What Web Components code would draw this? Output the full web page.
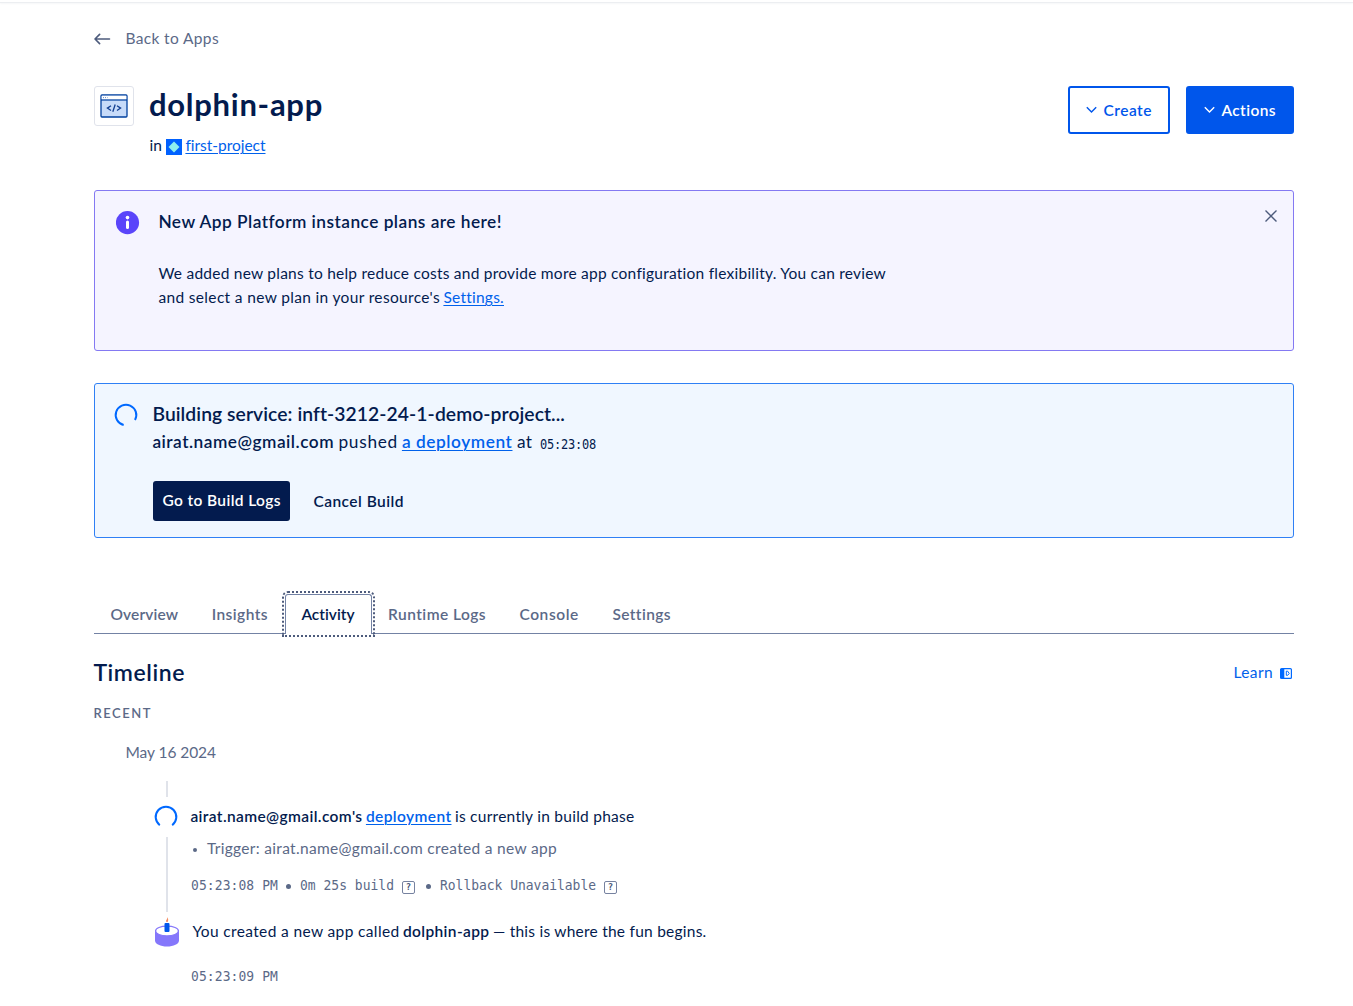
<!DOCTYPE html>
<html lang="en">
<head>
<meta charset="utf-8">
<title>dolphin-app</title>
<style>
html,body{margin:0;background:#fff}
body{font-family:Lato,"Open Sans",sans-serif;font-size:15.5px;line-height:24px;color:#031b4e;width:1353px;height:1006px;overflow:hidden}
</style>
</head>
<body>
<app-page></app-page>
<script>
const define = (name, html, setup) => customElements.define(name, class extends HTMLElement {
  constructor() {
    super();
    const t = document.createElement('template');
    t.innerHTML = html;
    this.attachShadow({mode: 'open'}).append(t.content.cloneNode(true));
  }
  connectedCallback() { if (setup) setup(this); }
});

/* A single run of text tracked to an exact measure, given in px by "w". */
define('text-run', `<style>
:host{display:block;flex:none;white-space:pre;letter-spacing:.01px;text-indent:-.6px}
:host([link]){color:#0061eb;text-decoration:underline;text-underline-offset:2px;text-decoration-thickness:1px}
:host([strong]){font-weight:600}
:host([mono]){font-family:"DejaVu Sans Mono",monospace;font-size:13px;text-indent:0;transform:scaleY(1.1)}
:host([mono][small]){font-size:12px;transform:scaleY(1.15)}
</style><slot></slot>`, el => {
  const w = parseFloat(el.getAttribute('w'));
  if (!w) return;
  el.style.width = 'max-content';
  const natural = el.getBoundingClientRect().width;
  el.style.letterSpacing = ((w - natural) / el.textContent.length + .01).toFixed(3) + 'px';
  el.style.width = w + 'px';
});

define('text-row', `<style>:host{display:flex;align-items:baseline}</style><slot></slot>`);

define('load-spinner', `<style>:host{display:block;width:24px;height:24px;flex:none}svg{display:block;transform:rotate(var(--turn,0deg))}</style>
<svg width="24" height="24" viewBox="0 0 24 24" fill="none" stroke="#0069ff" stroke-width="2"><path d="M5.8 20.2A10.3 10.3 0 1 1 18.2 20.2"/></svg>`);

define('help-mark', `<style>:host{display:block;box-sizing:border-box;width:13px;height:13px;border:1px solid #7682a0;border-radius:2px;font:bold 9px/11px "DejaVu Sans Mono",monospace;text-align:center;color:#4a5878;flex:none}</style>?`);

define('bullet-dot', `<style>:host{display:block;width:5px;height:5px;border-radius:50%;background:#5b6987;flex:none}</style>`);

define('menu-button', `<style>
:host{display:flex;box-sizing:border-box;height:48px;border:2px solid #0056eb;border-radius:3px;align-items:center;padding:0 0 1px 16px;color:#0056eb;font-weight:600}
:host([solid]){background:#0056eb;color:#fff}
svg{margin-right:7px}
</style><svg width="11" height="8" viewBox="0 0 11 8" fill="none" stroke="currentColor" stroke-width="1.4"><path d="M.8 1.2 5.5 6 10.2 1.2"/></svg><slot></slot>`);

define('app-header', `<style>
:host{display:flex;height:80px;margin-top:36px;align-items:flex-start}
.tile{box-sizing:border-box;width:40px;height:40px;border:1px solid #e0e3eb;border-radius:3px;display:flex;align-items:center;justify-content:center}
.names{margin-left:16px;flex:1;margin-top:-1px}
.title{font-size:31px;line-height:38px;font-weight:700;text-indent:-1px}
.project{margin-top:10px;display:flex}
.project svg{margin:6px 4px 0 4px}
.actions{display:flex;gap:16px}
</style>
<div class="tile"><svg width="28" height="24" viewBox="0 0 28 24"><rect x="1" y="1" width="26" height="22" rx="1" fill="#c7dbf9" stroke="#00409e" stroke-width="1.3"/><path d="M1.7 1.7h24.6v3.8H1.7z" fill="#fff"/><path d="M1 6h26" stroke="#00409e" stroke-width="1.2"/><path d="M3 3.6h1m1 0h1m1 0h.6" stroke="#6c8fc8" stroke-width="1"/><g fill="none" stroke="#123f91" stroke-width="1.3"><path d="m11 11.700-3.600 2.400 3.600 2.400M17 11.700l3.600 2.400-3.600 2.400M15.200 10.500l-2.400 7.200"/></g></svg></div>
<div class="names">
<text-run class="title" w="173">dolphin-app</text-run>
<div class="project"><text-run w="12">in</text-run><svg width="16" height="16" viewBox="0 0 16 16"><path fill="#0061ff" d="M0 0h16v16H0z"/><path fill="#8ff0ee" d="m8 2.500 5.500 5.500L8 13.500 2.500 8z"/></svg><text-run link w="79.500">first-project</text-run></div>
</div>
<div class="actions"><menu-button style="width:102px"><text-run w="48">Create</text-run></menu-button><menu-button solid style="width:108px"><text-run w="54">Actions</text-run></menu-button></div>`);

define('plans-notice', `<style>
:host{display:flex;box-sizing:border-box;height:161px;margin-top:24px;border:1px solid #8479f2;border-radius:3px;background:#f5f4ff;align-items:flex-start;padding:20px 16px 0 21px}
.copy{flex:1;margin-left:19px}
.head{font-size:17.3px;font-weight:600}
.body{margin-top:27px}
.x{margin-top:-1px}
</style>
<svg width="24" height="24" viewBox="0 0 24 24"><circle cx="11.500" cy="11.600" r="11.600" fill="#5a45fa"/><circle cx="11.500" cy="6.600" r="1.800" fill="#fff"/><path d="M11.500 11v5.600" stroke="#fff" stroke-width="3" stroke-linecap="round"/></svg>
<div class="copy" style="margin-top:-1px"><text-run class="head" w="343">New App Platform instance plans are here!</text-run>
<div class="body"><text-run w="727">We added new plans to help reduce costs and provide more app configuration flexibility. You can review</text-run>
<text-row><text-run w="281">and select a new plan in your resource's</text-run><text-run link w="60" style="margin-left:4px">Settings.</text-run></text-row></div></div>
<svg class="x" width="12" height="12" viewBox="0 0 12 12" fill="none" stroke="#4d5b7c" stroke-width="1.4"><path d="m.5.5 11 11m0-11-11 11"/></svg>`);

define('build-status', `<style>
:host{display:flex;box-sizing:border-box;height:155px;margin-top:32px;border:1px solid #2f80f5;border-radius:3px;background:#f0f7ff;padding:19px 16px 0 19px}
load-spinner{--turn:-24deg}
.copy{margin-left:15px;margin-top:-3px}
.head{font-size:19.3px;line-height:28px;font-weight:600}
.line{font-size:17.3px;line-height:28px;height:28px}
.btns{display:flex;align-items:center;margin-top:25px;font-weight:600}
.btns>text-run{margin-top:-1px}
.go{box-sizing:border-box;width:137px;height:40px;padding:7px 10px;background:#031b4e;border-radius:3px;color:#fff;margin-right:24px}
</style>
<load-spinner></load-spinner>
<div class="copy"><text-run class="head" w="412">Building service: inft-3212-24-1-demo-project...</text-run>
<text-row class="line"><text-run strong w="181">airat.name@gmail.com</text-run><text-run w="59" style="margin-left:5px">pushed</text-run><text-run link strong w="110" style="margin-left:4.5px">a deployment</text-run><text-run w="15" style="margin-left:5px">at</text-run><text-run mono small w="56" style="margin-left:7.5px">05:23:08</text-run></text-row>
<div class="btns"><div class="go"><text-run w="118">Go to Build Logs</text-run></div><text-run w="90">Cancel Build</text-run></div></div>`);

define('tab-item', `<style>
:host{display:block;box-sizing:border-box;height:40px;padding:7px 16px 0;border:1px solid transparent;border-bottom:0;color:#5b6987;font-weight:600}
:host([active]){color:#031b4e;background:#fff;border-color:#7382a4;border-radius:3px 3px 0 0;outline:2px dotted #4d5b7c;outline-offset:1px}
</style><slot></slot>`);

define('tab-bar', `<style>:host{display:flex;box-sizing:border-box;height:40px;margin-top:56px;border-bottom:1px solid #7382a4}</style>
<tab-item><text-run w="67.300">Overview</text-run></tab-item><tab-item><text-run w="55.700">Insights</text-run></tab-item><tab-item active><text-run w="52.700">Activity</text-run></tab-item><tab-item><text-run w="97.300">Runtime Logs</text-run></tab-item><tab-item><text-run w="59">Console</text-run></tab-item><tab-item><text-run w="58">Settings</text-run></tab-item>`);

define('activity-timeline', `<style>
:host{display:block}
.top{display:flex;justify-content:space-between;margin-top:22px;height:32px}
.h{font-size:23px;line-height:32px;font-weight:600}
.learn{display:flex;align-items:center;height:30px;margin-top:1px;color:#0061eb;padding-right:2px}
.learn svg{margin-left:7px;margin-top:3px}
.recent{font-size:13px;line-height:20px;font-weight:600;color:#5b6987;margin-top:15px}
.date{margin:17px 0 0 32px;color:#5b6987}
.feed{display:flex;margin-top:17px;padding-left:61px}
.rail{display:flex;flex-direction:column;align-items:center;width:24px}
.bar{width:2px;background:#e0e3ea;flex:none}
.items{margin-left:12px;color:#031b4e}
.meta{display:flex;align-items:center;height:24px;color:#5b6987}
</style>
<div class="top"><text-run class="h" w="91">Timeline</text-run><div class="learn"><text-run w="39">Learn</text-run><svg width="12" height="11" viewBox="0 0 12 11"><rect x=".6" y=".6" width="10.800" height="9.800" rx="1" fill="#fff" stroke="#0069ff" stroke-width="1.200"/><path d="M0 1h4.300v9.300H0z" fill="#0069ff"/><path d="M6.300 3.200h1.400L9.200 5.500 7.700 7.300H6.300z" fill="none" stroke="#0069ff"/></svg></div></div>
<text-run class="recent" w="58">RECENT</text-run>
<text-run class="date" w="90">May 16 2024</text-run>
<div class="feed">
<div class="rail"><div class="bar" style="height:16px"></div><load-spinner style="margin:8px 2px 16px 0"></load-spinner><div class="bar" style="height:75px;margin-top:-8px"></div>
<svg style="margin-top:5px" width="24" height="30" viewBox="0 0 24 30"><path d="M0 13v10.500C0 27 5.500 29.500 12 29.500S24 27 24 23.500V13z" fill="#8577fb"/><ellipse cx="12" cy="14" rx="11.400" ry="4.900" fill="#fff" stroke="#8577fb" stroke-width="1.200"/><rect x="9.500" y="6" width="5" height="9" rx="1" fill="#0056eb"/><path d="M12.700 0c.2 2 1.100 3-.1 5h-1.200c-1-2 1-2.500 1.300-5z" fill="#f38a5e"/></svg></div>
<div class="items">
<text-row style="margin-top:23px"><text-run strong w="171.500">airat.name@gmail.com's</text-run><text-run link strong w="85" style="margin-left:4px">deployment</text-run><text-run w="179" style="margin-left:4px">is currently in build phase</text-run></text-row>
<div class="meta" style="margin-top:8px"><bullet-dot style="margin:3px 10.500px 0 2px;width:4px;height:4px"></bullet-dot><text-run w="349.500">Trigger: airat.name@gmail.com created a new app</text-run></div>
<div class="meta" style="margin-top:14px"><text-run mono w="87">05:23:08 PM</text-run><bullet-dot style="margin:1px 9px 0 8px"></bullet-dot><text-run mono w="94">0m 25s build</text-run><help-mark style="margin:2px 11px 0 8px"></help-mark><bullet-dot style="margin:1px 9px 0 0"></bullet-dot><text-run mono w="156">Rollback Unavailable</text-run><help-mark style="margin:2px 0 0 8px"></help-mark></div>
<text-row style="margin:21px 0 0 2px"><text-run w="206.500">You created a new app called</text-run><text-run strong w="86" style="margin-left:4px">dolphin-app</text-run><text-run w="213" style="margin-left:4px">— this is where the fun begins.</text-run></text-row>
<div class="meta" style="margin-top:22px"><text-run mono w="87">05:23:09 PM</text-run></div>
</div></div>`);

define('app-page', `<style>
:host{display:block}
.edge{height:2px;border-bottom:1px solid #eceef1;box-shadow:0 1px 2px #f6f7f8}
main{width:1200px;margin-left:94px;padding-top:23px}
.back{display:flex;align-items:center;color:#5b6987}
.back svg{margin-right:15px;margin-top:2px}
</style><div class="edge"></div><main>
<div class="back"><svg width="17" height="12" viewBox="0 0 17 12" fill="none" stroke="#4d5b7c" stroke-width="1.600" stroke-linecap="round" stroke-linejoin="round"><path d="M15.500 6H1M5.600 1.400 1 6l4.600 4.600"/></svg><text-run w="93">Back to Apps</text-run></div>
<app-header></app-header><plans-notice></plans-notice><build-status></build-status><tab-bar></tab-bar><activity-timeline></activity-timeline></main>`);
</script>
</body>
</html>
